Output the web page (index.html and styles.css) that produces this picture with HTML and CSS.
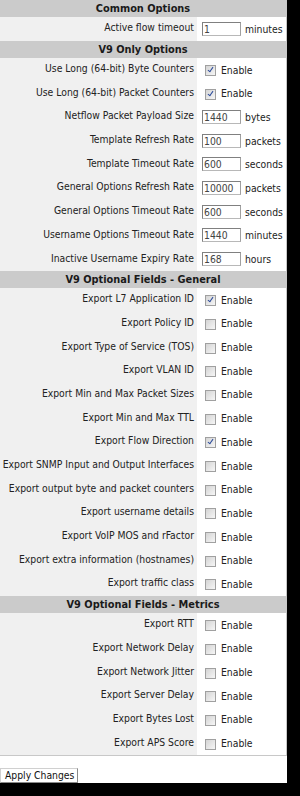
FILE: index.html
```html
<!DOCTYPE html>
<html>
<head>
<meta charset="utf-8">
<link rel="stylesheet" href="styles.css">
</head>
<body>
<div class="window">
  <div class="form">
    <div class="head">Common Options</div>
    <div class="row first"><div class="label">Active flow timeout</div><div class="value"><span class="field">1</span><span class="unit">minutes</span></div></div>

    <div class="head">V9 Only Options</div>
    <div class="row"><div class="label">Use Long (64-bit) Byte Counters</div><div class="value"><span class="cb on"></span><span class="en">Enable</span></div></div>
    <div class="row"><div class="label">Use Long (64-bit) Packet Counters</div><div class="value"><span class="cb on"></span><span class="en">Enable</span></div></div>
    <div class="row"><div class="label">Netflow Packet Payload Size</div><div class="value"><span class="field">1440</span><span class="unit">bytes</span></div></div>
    <div class="row"><div class="label">Template Refresh Rate</div><div class="value"><span class="field">100</span><span class="unit">packets</span></div></div>
    <div class="row"><div class="label">Template Timeout Rate</div><div class="value"><span class="field">600</span><span class="unit">seconds</span></div></div>
    <div class="row"><div class="label">General Options Refresh Rate</div><div class="value"><span class="field">10000</span><span class="unit">packets</span></div></div>
    <div class="row"><div class="label">General Options Timeout Rate</div><div class="value"><span class="field">600</span><span class="unit">seconds</span></div></div>
    <div class="row"><div class="label">Username Options Timeout Rate</div><div class="value"><span class="field">1440</span><span class="unit">minutes</span></div></div>
    <div class="row"><div class="label">Inactive Username Expiry Rate</div><div class="value"><span class="field">168</span><span class="unit">hours</span></div></div>

    <div class="head">V9 Optional Fields - General</div>
    <div class="row"><div class="label">Export L7 Application ID</div><div class="value"><span class="cb on"></span><span class="en">Enable</span></div></div>
    <div class="row"><div class="label">Export Policy ID</div><div class="value"><span class="cb"></span><span class="en">Enable</span></div></div>
    <div class="row"><div class="label">Export Type of Service (TOS)</div><div class="value"><span class="cb"></span><span class="en">Enable</span></div></div>
    <div class="row"><div class="label">Export VLAN ID</div><div class="value"><span class="cb"></span><span class="en">Enable</span></div></div>
    <div class="row"><div class="label">Export Min and Max Packet Sizes</div><div class="value"><span class="cb"></span><span class="en">Enable</span></div></div>
    <div class="row"><div class="label">Export Min and Max TTL</div><div class="value"><span class="cb"></span><span class="en">Enable</span></div></div>
    <div class="row"><div class="label">Export Flow Direction</div><div class="value"><span class="cb on"></span><span class="en">Enable</span></div></div>
    <div class="row"><div class="label">Export SNMP Input and Output Interfaces</div><div class="value"><span class="cb"></span><span class="en">Enable</span></div></div>
    <div class="row"><div class="label">Export output byte and packet counters</div><div class="value"><span class="cb"></span><span class="en">Enable</span></div></div>
    <div class="row"><div class="label">Export username details</div><div class="value"><span class="cb"></span><span class="en">Enable</span></div></div>
    <div class="row"><div class="label">Export VoIP MOS and rFactor</div><div class="value"><span class="cb"></span><span class="en">Enable</span></div></div>
    <div class="row"><div class="label">Export extra information (hostnames)</div><div class="value"><span class="cb"></span><span class="en">Enable</span></div></div>
    <div class="row"><div class="label">Export traffic class</div><div class="value"><span class="cb"></span><span class="en">Enable</span></div></div>

    <div class="head">V9 Optional Fields - Metrics</div>
    <div class="row"><div class="label">Export RTT</div><div class="value"><span class="cb"></span><span class="en">Enable</span></div></div>
    <div class="row"><div class="label">Export Network Delay</div><div class="value"><span class="cb"></span><span class="en">Enable</span></div></div>
    <div class="row"><div class="label">Export Network Jitter</div><div class="value"><span class="cb"></span><span class="en">Enable</span></div></div>
    <div class="row"><div class="label">Export Server Delay</div><div class="value"><span class="cb"></span><span class="en">Enable</span></div></div>
    <div class="row"><div class="label">Export Bytes Lost</div><div class="value"><span class="cb"></span><span class="en">Enable</span></div></div>
    <div class="row"><div class="label">Export APS Score</div><div class="value"><span class="cb"></span><span class="en">Enable</span></div></div>
  </div>
  <div class="actions"><span class="btn">Apply Changes</span></div>
</div>
</body>
</html>
```

FILE: styles.css
```css
html, body {
  margin: 0;
  padding: 0;
  background: #000;
}
.window {
  width: 287px;
  height: 783px;
  background: #fff;
  font-family: "DejaVu Sans Condensed", "DejaVu Sans", sans-serif;
  font-size: 10.3px;
  color: #222;
  display: flex;
  flex-direction: column;
}
.form {
  border-right: 1px solid #c8c8c8;
  border-bottom: 1px solid #c8c8c8;
  display: flex;
  flex-direction: column;
}
.head {
  height: 17px;
  line-height: 17px;
  background: #cbcbcb;
  font-weight: bold;
  font-size: 10.9px;
  text-align: center;
  color: #1a1a1a;
}
.row {
  height: 23.7px;
  display: grid;
  grid-template-columns: 197px 1fr;
}
.label {
  background: #f0f0f0;
  text-align: right;
  padding-right: 3px;
  display: flex;
  align-items: center;
  justify-content: flex-end;
  padding-bottom: 3px;
  white-space: nowrap;
}
.value {
  display: flex;
  align-items: center;
  background: #fff;
}
.field {
  box-sizing: border-box;
  width: 39px;
  height: 14px;
  margin-left: 5px;
  border: 1px solid #808080;
  border-right-color: #a0a0a0;
  border-bottom-color: #b8b8b8;
  line-height: 12px;
  padding-left: 1px;
  color: #444;
}
.unit {
  margin-left: 4px;
}
.cb {
  box-sizing: border-box;
  width: 11px;
  height: 11px;
  margin-left: 8px;
  margin-top: 2px;
  border: 1px solid #a0a0a0;
  background: linear-gradient(135deg, #d4d4d4, #f6f6f6);
  position: relative;
}
.cb.on::after {
  content: "";
  position: absolute;
  left: 3px;
  top: 0px;
  width: 2px;
  height: 5px;
  border-right: 1.5px solid #2b4b9b;
  border-bottom: 1.5px solid #2b4b9b;
  transform: rotate(35deg);
}
.en {
  margin-left: 5px;
}
.actions {
  padding-top: 12px;
}
.btn {
  display: inline-block;
  box-sizing: border-box;
  height: 15px;
  line-height: 13px;
  padding: 0 3px 0 4px;
  border: 1px solid #8a8a8a;
  border-top-color: #d0d0d0;
  border-left-color: #d0d0d0;
  background: #fff;
  color: #111;
  font-size: 10.3px;
}
```
